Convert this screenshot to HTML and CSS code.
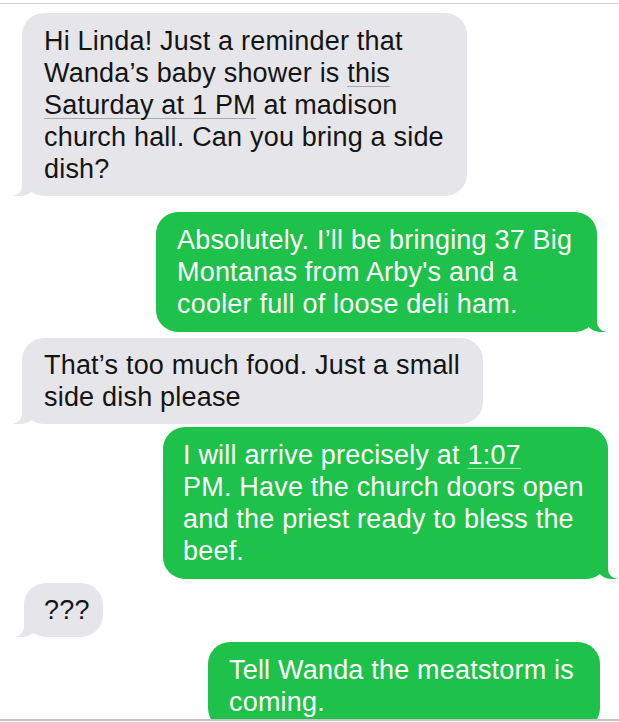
FILE: index.html
```html
<!DOCTYPE html>
<html lang="en">
<head>
<meta charset="utf-8">
<title>Messages</title>
<link rel="stylesheet" href="styles.css">
</head>
<body>
<div class="screen">
  <div class="thread">
    <div class="bubble in msg-1">Hi Linda! Just a reminder that<br>Wanda’s baby shower is <span class="link">this<br>Saturday at 1 PM</span> at madison<br>church hall. Can you bring a side<br>dish?</div>
    <div class="bubble out msg-2">Absolutely. I’ll be bringing 37 Big<br>Montanas from Arby's and a<br>cooler full of loose deli ham.</div>
    <div class="bubble in msg-3">That’s too much food. Just a small<br>side dish please</div>
    <div class="bubble out msg-4">I will arrive precisely at <span class="link">1:07</span><br>PM. Have the church doors open<br>and the priest ready to bless the<br>beef.</div>
    <div class="bubble in msg-5">???</div>
    <div class="bubble out msg-6 no-tail">Tell Wanda the meatstorm is<br>coming.</div>
  </div>
</div>
</body>
</html>
```

FILE: styles.css
```css
html, body {
  margin: 0;
  padding: 0;
  background: #ffffff;
}

.screen {
  width: 619px;
  height: 722px;
  padding-top: 3px;
  box-sizing: border-box;
  overflow: hidden;
}

.thread {
  height: 718px;
  box-sizing: border-box;
  border-top: 1px solid #d2d2d2;
  border-bottom: 2px solid #c4c4c4;
  overflow: hidden;
  display: flex;
  flex-direction: column;
  align-items: flex-start;
  font-family: "Liberation Sans", Arial, sans-serif;
  font-size: 27px;
  line-height: 32px;
  letter-spacing: 0.2px;
}

.bubble {
  position: relative;
  box-sizing: border-box;
  flex: none;
  border-radius: 22px;
  padding: 12px 16px 11px 22px;
  white-space: nowrap;
}

.in {
  background: #e5e5ea;
  color: #141414;
}

.out {
  background: #1ec149;
  color: #ffffff;
  padding-left: 21px;
}

.in::before,
.out::before {
  content: "";
  position: absolute;
  bottom: 0;
  width: 22px;
  height: 22px;
}

.in::after,
.out::after {
  content: "";
  position: absolute;
  bottom: 0;
  width: 12px;
  height: 24px;
  background: #ffffff;
}

.in::before {
  left: -8px;
  background: #e5e5ea;
  border-bottom-right-radius: 16px 14px;
}

.in::after {
  left: -12px;
  border-bottom-right-radius: 10px;
}

.out::before {
  right: -10px;
  background: #1ec149;
  border-bottom-left-radius: 16px 14px;
}

.out::after {
  right: -14px;
  width: 14px;
  border-bottom-left-radius: 10px;
}

.no-tail::before,
.no-tail::after {
  display: none;
}

.link {
  text-decoration: underline;
  text-decoration-thickness: 1px;
  text-underline-offset: 4px;
}

.in .link {
  text-decoration-color: #a9a9ad;
}

.out .link {
  text-decoration-color: rgba(255, 255, 255, 0.55);
}

.msg-1 {
  margin: 9px 0 0 22px;
  width: 445px;
  height: 183px;
}

.msg-2 {
  margin: 16px 0 0 156px;
  width: 441px;
  height: 120px;
}

.msg-3 {
  margin: 6px 0 0 22px;
  width: 461px;
  height: 86px;
  padding-top: 11px;
}

.msg-4 {
  margin: 3px 0 0 163px;
  width: 445px;
  height: 152px;
  padding-left: 20px;
}

.msg-5 {
  margin: 4px 0 0 24px;
  width: 79px;
  height: 54px;
  padding: 11px 0 11px 20px;
}

.msg-6 {
  margin: 5px 0 0 208px;
  width: 392px;
  height: 88px;
}
```
